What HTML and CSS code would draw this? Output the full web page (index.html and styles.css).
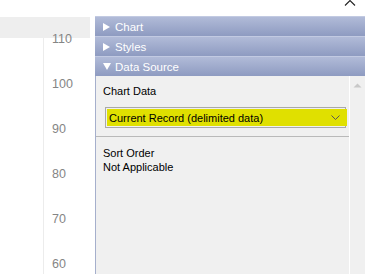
FILE: index.html
```html
<!DOCTYPE html>
<html>
<head>
<meta charset="utf-8">
<link rel="stylesheet" href="styles.css">
</head>
<body>
<div class="page">
  <div class="chart">
    <div class="band"></div>
    <div class="axis">
      <div class="labels">
        <div class="lbl">110</div>
        <div class="lbl">100</div>
        <div class="lbl">90</div>
        <div class="lbl">80</div>
        <div class="lbl">70</div>
        <div class="lbl last">60</div>
      </div>
    </div>
  </div>
  <div class="panel">
    <div class="topbar">
      <svg class="caret" width="12" height="7" viewBox="0 0 12 7"><path d="M1 6.5 L6 1.5 L11 6.5" fill="none" stroke="#222" stroke-width="1.1"/></svg>
    </div>
    <div class="hdr"><svg class="tri" width="7" height="8" viewBox="0 0 7 8"><path d="M0 0 L7 4 L0 8 Z" fill="#fff"/></svg>Chart</div>
    <div class="hdr"><svg class="tri" width="7" height="8" viewBox="0 0 7 8"><path d="M0 0 L7 4 L0 8 Z" fill="#fff"/></svg>Styles</div>
    <div class="hdr"><svg class="tri" width="8" height="7" viewBox="0 0 8 7"><path d="M0 0 L8 0 L4 7 Z" fill="#fff"/></svg>Data Source</div>
    <div class="body">
      <div class="content">
        <div class="sec">
          <div class="label">Chart Data</div>
          <div class="select">
            <div class="selinner">
              <span>Current Record (delimited data)</span>
              <svg width="9" height="5" viewBox="0 0 9 5"><path d="M0.5 0.5 L4.5 4.5 L8.5 0.5" fill="none" stroke="#555" stroke-width="1"/></svg>
            </div>
          </div>
        </div>
        <div class="sep"></div>
        <div class="sec2">
          <div class="label">Sort Order</div>
          <div class="label">Not Applicable</div>
        </div>
      </div>
      <div class="scroll">
        <svg class="up" width="9" height="5" viewBox="0 0 9 5"><path d="M0.5 4.5 L4.5 0.5 L8.5 4.5 Z" fill="#c8c8c8"/></svg>
      </div>
    </div>
  </div>
</div>
</body>
</html>
```

FILE: styles.css
```css
html, body {
  margin: 0;
  padding: 0;
  background: #ffffff;
  overflow: hidden;
}
.page {
  display: flex;
  width: 365px;
  height: 274px;
  overflow: hidden;
  font-family: "Liberation Sans", Arial, sans-serif;
}
.chart {
  width: 95px;
  flex: none;
  display: flex;
  flex-direction: column;
}
.band {
  flex: none;
  margin-top: 17px;
  width: 90px;
  height: 21px;
  background: #eeeeee;
}
.axis {
  flex: 1;
  min-height: 0;
  margin-left: 43px;
  border-left: 1px solid #ececec;
}
.labels {
  margin-top: -21px;
  padding-left: 8px;
}
.lbl {
  height: 45.1px;
  line-height: 45.1px;
  font-size: 12.5px;
  color: #858585;
}
.lbl.last {
  height: 30px;
  line-height: 15px;
  padding-top: 15px;
  box-sizing: border-box;
}
.panel {
  flex: 1;
  display: flex;
  flex-direction: column;
  min-width: 0;
}
.topbar {
  flex: none;
  height: 16px;
  display: flex;
  justify-content: flex-end;
  align-items: flex-start;
  padding-right: 9px;
}
.caret {
  margin-top: -1px;
}
.hdr {
  flex: none;
  height: 19px;
  border-top: 1px solid #c2cae2;
  background: linear-gradient(#b1bbd8, #8e9bc1);
  color: #ffffff;
  font-size: 11.5px;
  display: flex;
  align-items: center;
  padding-left: 8px;
}
.tri {
  flex: none;
  margin-right: 5px;
}
.hdr:nth-child(4) .tri {
  margin-right: 4px;
}
.body {
  flex: 1;
  display: flex;
  min-height: 0;
}
.content {
  flex: 1;
  background: #f0f0f0;
  border-left: 1px solid #a5afcc;
  font-size: 11px;
  color: #000;
}
.sec {
  padding: 8px 3px 8px 7px;
}
.label {
  line-height: 14px;
  height: 14px;
}
.select {
  margin-top: 9px;
  margin-left: 2px;
  border: 1px solid #a9a9a9;
  padding: 1px;
  height: 17px;
}
.selinner {
  background: #e0e000;
  height: 17px;
  margin-right: -3px;
  display: flex;
  align-items: center;
  justify-content: space-between;
  padding: 0 7px 0 2px;
}
.selinner svg {
  flex: none;
}
.sep {
  height: 1px;
  background: #b9b9b9;
}
.sec2 {
  padding: 9px 7px;
}
.scroll {
  width: 15px;
  flex: none;
  background: #f0f0f0;
  border-left: 1px solid #ffffff;
  display: flex;
  justify-content: center;
  align-items: flex-start;
}
.up {
  margin-top: 7px;
}
```
